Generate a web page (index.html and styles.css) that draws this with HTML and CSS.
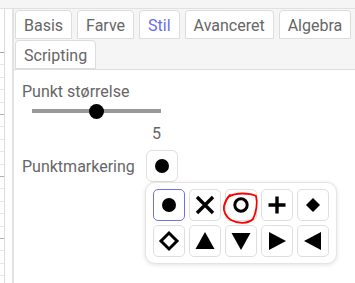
FILE: index.html
```html
<!DOCTYPE html>
<html lang="da">
<head>
<meta charset="utf-8">
<link rel="stylesheet" href="styles.css">
</head>
<body>
<div class="topbar"></div>
<div class="main">
  <div class="graphics">
    <div class="gv">
      <div class="gv-box"></div>
      <div class="gv-grid"></div>
    </div>
    <div class="gv-gap"></div>
  </div>
  <div class="divider"></div>
  <div class="panel">
    <div class="tabs">
      <div class="tab">Basis</div>
      <div class="tab">Farve</div>
      <div class="tab selected">Stil</div>
      <div class="tab">Avanceret</div>
      <div class="tab">Algebra</div>
      <div class="tab">Scripting</div>
    </div>
    <div class="content">
      <div class="label">Punkt størrelse</div>
      <div class="slider">
        <div class="track"></div>
        <div class="thumb" style="left: 50%"></div>
      </div>
      <div class="value">5</div>
      <div class="marker-row">
        <span class="label">Punktmarkering</span>
        <div class="marker-btn">
          <svg width="16" height="16" viewBox="0 0 16 16"><circle cx="8" cy="8" r="7" fill="#000"/></svg>
        </div>
        <div class="popup">
          <div class="grid">
            <div class="cell selected"><svg width="20" height="20" viewBox="0 0 20 20"><circle cx="10" cy="10" r="7" fill="#000"/></svg></div>
            <div class="cell"><svg width="22" height="22" viewBox="0 0 22 22"><path d="M3 3 L19 19 M19 3 L3 19" stroke="#000" stroke-width="3.4"/></svg></div>
            <div class="cell"><svg width="20" height="20" viewBox="0 0 20 20"><circle cx="10" cy="10" r="6.2" fill="none" stroke="#000" stroke-width="3"/></svg></div>
            <div class="cell"><svg width="20" height="20" viewBox="0 0 20 20"><path d="M10 1.5 V18.5 M1.5 10 H18.5" stroke="#000" stroke-width="3.4"/></svg></div>
            <div class="cell"><svg width="20" height="20" viewBox="0 0 20 20"><path d="M10 3 L17 10 L10 17 L3 10 Z" fill="#000"/></svg></div>
            <div class="cell"><svg width="22" height="22" viewBox="0 0 22 22"><path d="M11 3 L19 11 L11 19 L3 11 Z" fill="none" stroke="#000" stroke-width="3"/></svg></div>
            <div class="cell"><svg width="22" height="22" viewBox="0 0 22 22"><path d="M11 2 L20.5 19 L1.5 19 Z" fill="#000"/></svg></div>
            <div class="cell"><svg width="22" height="22" viewBox="0 0 22 22"><path d="M1.5 3 L20.5 3 L11 20 Z" fill="#000"/></svg></div>
            <div class="cell"><svg width="22" height="22" viewBox="0 0 22 22"><path d="M3 2 L20 11 L3 20 Z" fill="#000"/></svg></div>
            <div class="cell"><svg width="22" height="22" viewBox="0 0 22 22"><path d="M19 2 L2 11 L19 20 Z" fill="#000"/></svg></div>
          </div>
          <svg class="scribble" width="191" height="83" viewBox="0 0 191 83"><path d="M82 14 C 90 9, 104 10, 110 13 C 112 20, 110 30, 107 36 C 102 41, 92 41, 85 37 C 80 34, 77 28, 78 23 C 79 19, 80 16, 84 12" fill="none" stroke="#ff0000" stroke-width="1.8" stroke-linecap="round"/></svg>
        </div>
      </div>
    </div>
  </div>
</div>
</body>
</html>
```

FILE: styles.css
```css
html, body {
  margin: 0;
  padding: 0;
}
body {
  width: 355px;
  height: 283px;
  overflow: hidden;
  background: #fff;
  font-family: Roboto, "Liberation Sans", sans-serif;
  font-size: 16px;
  color: #666;
}
.topbar {
  height: 8px;
  background: #f5f5f5;
  border-bottom: 1px solid #e0e0e0;
}
.main {
  display: flex;
  height: 274px;
}
.graphics {
  width: 12px;
  display: flex;
  background: #fff;
}
.gv {
  width: 4px;
  border-right: 1px solid #dcdcdc;
  display: flex;
  flex-direction: column;
}
.gv-box {
  height: 43px;
  border-bottom: 1px solid #a8a8a8;
}
.gv-grid {
  flex: 1;
  background:
    repeating-linear-gradient(to bottom, transparent 0 61px, #b0b0b0 61px 62px) 0 0 / 100% 100%,
    repeating-linear-gradient(to bottom, transparent 0 11.4px, #e6e6e6 11.4px 12.4px);
}
.gv-gap {
  width: 7px;
}
.divider {
  width: 2px;
  background: #e2e2e2;
}
.panel {
  flex: 1;
  position: relative;
  display: flex;
  flex-direction: column;
}
.tabs {
  display: flex;
  flex-wrap: wrap;
  gap: 1px 5px;
  padding: 1px 0 0 1px;
  background: #f5f5f5;
  border-bottom: 1px solid #dcdcdc;
}
.tab {
  height: 29px;
  box-sizing: border-box;
  padding: 2px 8px 0;
  line-height: 25px;
  background: #fff;
  border: 1px solid #dcdcdc;
  border-radius: 4px 4px 0 0;
  color: #666;
}
.tab.selected {
  color: #6a6af2;
}
.content {
  padding: 12px 0 0 8px;
  display: flex;
  flex-direction: column;
}
.label {
  line-height: 19px;
  color: #666;
}
.slider {
  position: relative;
  margin: 2px 0 0 10px;
  width: 129px;
  height: 16px;
  display: flex;
  align-items: center;
}
.track {
  width: 100%;
  height: 4px;
  background: #999;
}
.thumb {
  position: absolute;
  top: 0.5px;
  width: 15px;
  height: 15px;
  margin-left: -7.5px;
  border-radius: 50%;
  background: #000;
}
.value {
  width: 139px;
  text-align: right;
  line-height: 19px;
  margin-top: 5px;
}
.marker-row {
  position: relative;
  display: flex;
  align-items: center;
  gap: 11px;
  margin-top: 7px;
}
.marker-btn {
  width: 32px;
  height: 32px;
  box-sizing: border-box;
  border: 1px solid #e0e0e0;
  border-radius: 6px;
  display: flex;
  align-items: center;
  justify-content: center;
}
.popup {
  position: absolute;
  left: 123px;
  top: 32px;
  background: #fff;
  border: 1px solid #e4e4e4;
  border-radius: 10px;
  box-shadow: 0 1px 4px rgba(0, 0, 0, 0.12);
  padding: 6px 7px;
}
.grid {
  display: grid;
  grid-template-columns: repeat(5, 32px);
  grid-auto-rows: 32px;
  gap: 4px;
}
.cell {
  box-sizing: border-box;
  border: 1px solid #dedede;
  border-radius: 5px;
  display: flex;
  align-items: center;
  justify-content: center;
}
.cell.selected {
  border-color: #6f6ff0;
}
.scribble {
  position: absolute;
  left: 0;
  top: 0;
  pointer-events: none;
}
```
